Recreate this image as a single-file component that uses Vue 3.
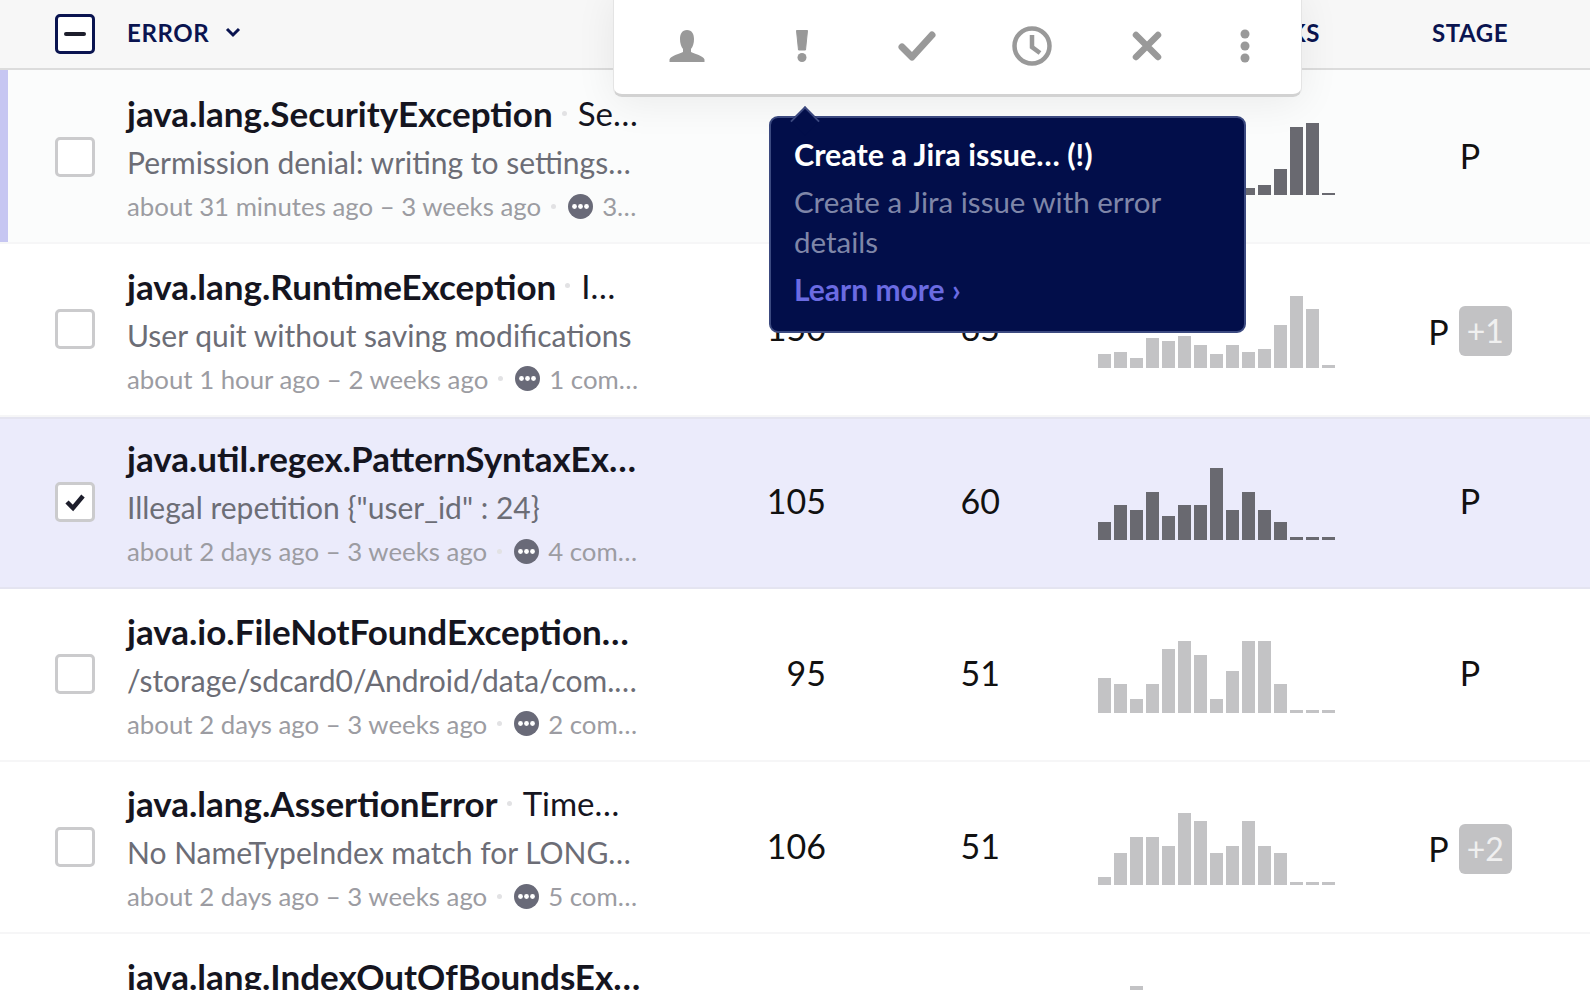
<script setup>
const rows = [
  { name: 'java.lang.SecurityException', sub: 'Se…', msg: 'Permission denial: writing to settings…', time: 'about 31 minutes ago – 3 weeks ago', comments: '3…', events: 180, users: 72, stage: 'P', extra: '', state: 'new', bars: [4, 6, 3, 8, 5, 7, 4, 3, 5, 6.7, 9.7, 26, 68, 72, 2.4] },
  { name: 'java.lang.RuntimeException', sub: 'I…', msg: 'User quit without saving modifications', time: 'about 1 hour ago – 2 weeks ago', comments: '1 com…', events: 150, users: 65, stage: 'P', extra: '+1', state: '', bars: [13.3, 16, 9.3, 29.3, 26.7, 32, 22.7, 13.3, 22.7, 16, 18.7, 42.7, 72, 58.7, 2.4] },
  { name: 'java.util.regex.PatternSyntaxEx…', sub: '', msg: 'Illegal repetition {"user_id" : 24}', time: 'about 2 days ago – 3 weeks ago', comments: '4 com…', events: 105, users: 60, stage: 'P', extra: '', state: 'selected', bars: [18.4, 34.6, 29.7, 47.8, 24, 34.6, 34.6, 72, 29.7, 47.8, 29.7, 18.4, 3, 3, 3] },
  { name: 'java.io.FileNotFoundException…', sub: '', msg: '/storage/sdcard0/Android/data/com.…', time: 'about 2 days ago – 3 weeks ago', comments: '2 com…', events: 95, users: 51, stage: 'P', extra: '', state: '', bars: [34.6, 28.2, 13.2, 28.2, 64, 72, 57.2, 13.2, 42, 72, 72, 28.2, 3, 3, 3] },
  { name: 'java.lang.AssertionError', sub: 'Time…', msg: 'No NameTypeIndex match for LONG…', time: 'about 2 days ago – 3 weeks ago', comments: '5 com…', events: 106, users: 51, stage: 'P', extra: '+2', state: '', bars: [8, 31.6, 47.8, 47.8, 39.5, 72, 63.6, 31.6, 39.5, 63.6, 39.5, 31.6, 3, 3, 3] },
  { name: 'java.lang.IndexOutOfBoundsEx…', sub: '', msg: 'Index: 4, Size: 3', time: 'about 2 days ago – 3 weeks ago', comments: '1 com…', events: 90, users: 48, stage: 'P', extra: '', state: '', bars: [20, 30, 72, 40, 30, 24, 40, 50, 30, 20, 24, 18, 3, 3, 3] },
]
</script>

<template>
  <div class="page">
    <div class="head">
      <div class="cell check-cell">
        <span class="box box-all"><i></i></span>
      </div>
      <div class="cell head-error">
        ERROR
        <svg class="chevron" width="16" height="11" viewBox="0 0 16 11"><path d="M2 2l6 6 6-6" fill="none" stroke="#0a1450" stroke-width="3"/></svg>
      </div>
      <div class="cell head-num">EVENTS</div>
      <div class="cell head-num">USERS</div>
      <div class="cell head-trend">2 WEEKS</div>
      <div class="cell head-stage">STAGE</div>
    </div>

    <div v-for="row in rows" :key="row.name" class="row" :class="row.state">
      <div class="cell check-cell">
        <span class="box">
          <svg v-if="row.state == 'selected'" width="26" height="22" viewBox="0 0 26 22"><path d="M5 11l6 6L21 5" fill="none" stroke="#1d1e2c" stroke-width="4.5"/></svg>
        </span>
      </div>
      <div class="cell error">
        <div class="title">
          <strong>{{ row.name }}</strong>
          <template v-if="row.sub">
            <span class="dot"></span>
            <span class="sub">{{ row.sub }}</span>
          </template>
        </div>
        <div class="msg">{{ row.msg }}</div>
        <div class="meta">
          <span>{{ row.time }}</span>
          <span class="dot small"></span>
          <svg class="bubble" width="25" height="25" viewBox="0 0 25 25">
            <circle cx="12.5" cy="12.5" r="12.5" fill="#696a78"/>
            <circle cx="6.5" cy="12.5" r="2.4" fill="#fff"/>
            <circle cx="12.5" cy="12.5" r="2.4" fill="#fff"/>
            <circle cx="18.5" cy="12.5" r="2.4" fill="#fff"/>
          </svg>
          <span class="count">{{ row.comments }}</span>
        </div>
      </div>
      <div class="cell num">{{ row.events }}</div>
      <div class="cell num users">{{ row.users }}</div>
      <div class="cell trend">
        <div class="bars">
          <span v-for="(b, i) in row.bars" :key="i" :style="{ height: b + 'px' }"></span>
        </div>
      </div>
      <div class="cell stage" :class="{ 'has-extra': row.extra }">
        <span>{{ row.stage }}</span>
        <span v-if="row.extra" class="badge">{{ row.extra }}</span>
      </div>
    </div>

    <div class="toolbar">
      <button>
        <svg width="36" height="34" viewBox="0 0 36 34"><path d="M18 1c5 0 7 4 7 9 0 4-1 7.500-3 10v3c4 2 12 3.500 13.500 7.500V33H.5v-2.500C2 26.500 10 25 14 23v-3C12 17.500 11 14 11 10c0-5 2-9 7-9z" fill="#999"/></svg>
      </button>
      <button>
        <svg width="14" height="34" viewBox="0 0 14 34"><path d="M1.500 1.500h11L10.500 21h-7z" fill="#999" stroke="#999" stroke-linejoin="round"/><circle cx="7" cy="28.500" r="4.500" fill="#999"/></svg>
      </button>
      <button>
        <svg width="38" height="30" viewBox="0 0 38 30"><path d="M4 16l10 10L34 4" fill="none" stroke="#999" stroke-width="7" stroke-linejoin="round" stroke-linecap="round"/></svg>
      </button>
      <button>
        <svg width="40" height="40" viewBox="0 0 40 40"><circle cx="20" cy="20" r="17.500" fill="none" stroke="#999" stroke-width="4.500"/><path d="M20 9v12l8 6" fill="none" stroke="#999" stroke-width="4.500"/></svg>
      </button>
      <button>
        <svg width="30" height="30" viewBox="0 0 30 30"><path d="M4 4l22 22M26 4L4 26" fill="none" stroke="#999" stroke-width="6.500" stroke-linecap="round"/></svg>
      </button>
      <button class="more">
        <svg width="10" height="34" viewBox="0 0 10 34"><circle cx="5" cy="5" r="4.500" fill="#999"/><circle cx="5" cy="17" r="4.500" fill="#999"/><circle cx="5" cy="29" r="4.500" fill="#999"/></svg>
      </button>
    </div>

    <div class="tip">
      <span class="tip-arrow"></span>
      <div class="tip-title">Create a Jira issue… (!)</div>
      <div class="tip-desc">Create a Jira issue with error details</div>
      <div class="tip-link">Learn more ›</div>
    </div>
  </div>
</template>

<style scoped>
.page {
  position: relative;
  width: 1590px;
  height: 990px;
  overflow: hidden;
  background: #fff;
  font-family: Lato, "Noto Sans", sans-serif;
  color: #111;
}

.head,
.row {
  display: grid;
  grid-template-columns: 109px 593px 188px 175px 333px 175px 17px;
}

.head {
  height: 70px;
  background: #f7f7f7;
  border-bottom: 2px solid #dcdcdc;
  box-sizing: border-box;
  align-items: center;
  font-size: 24px;
  font-weight: 700;
  color: #0a1450;
  letter-spacing: 0.6px;
}

.head-error,
.head-num,
.head-trend,
.head-stage {
  margin-bottom: 4px;
}

.head-error {
  padding-left: 18px;
  display: flex;
  align-items: center;
  gap: 16px;
}

.head-num {
  text-align: right;
  padding-right: 64px;
}

.head-trend {
  text-align: right;
  padding-right: 78px;
}

.head-stage {
  text-align: center;
  padding-right: 31px;
}

.head .check-cell {
  height: 68px;
}

.check-cell {
  display: flex;
  align-items: center;
  padding-left: 55px;
}

.box {
  display: flex;
  align-items: center;
  justify-content: center;
  width: 40px;
  height: 40px;
  box-sizing: border-box;
  border: 3px solid #cbcbcd;
  border-radius: 5px;
  background: #fff;
}

.box-all {
  border-color: #0a1450;
}

.box-all i {
  width: 22px;
  height: 4px;
  border-radius: 2px;
  background: #1d1e2c;
}

.row {
  height: 172.5px;
  box-sizing: border-box;
  border-bottom: 2px solid #f6f6f7;
  align-items: stretch;
}

.row.new {
  height: 174px;
  padding-top: 1.5px;
  background: #fbfcfc;
  box-shadow: inset 8px 0 0 #c6c6f2;
}

.row.selected {
  background: #ebebfb;
  border-bottom-color: #e4e4f0;
  box-shadow: inset 0 2px 0 #e4e4f0;
}

.error {
  padding: 17.5px 0 0 18px;
  min-width: 0;
}

.title {
  display: flex;
  align-items: center;
  height: 48px;
  font-size: 35px;
  white-space: nowrap;
  color: #15151f;
}

.title strong {
  font-weight: 700;
}

.dot {
  width: 5px;
  height: 5px;
  border-radius: 50%;
  background: #e2e2e4;
  margin: 0 11px 0 9px;
}

.dot.small {
  margin: 0 12px 0 10px;
}

.sub {
  font-weight: 400;
  font-size: 33px;
}

.msg {
  height: 48px;
  line-height: 48px;
  font-size: 30px;
  white-space: nowrap;
  color: #6c6d76;
  margin-top: 1px;
}

.meta {
  display: flex;
  align-items: center;
  height: 38px;
  font-size: 25.8px;
  white-space: nowrap;
  color: #9c9ca2;
  margin-top: 1px;
}

.bubble {
  margin-right: 9px;
}

.num {
  display: flex;
  align-items: center;
  justify-content: flex-end;
  padding: 0 64px 3px 0;
  font-size: 34px;
}

.num.users {
  padding-right: 65px;
}

.trend {
  padding: 51.5px 0 0 33px;
}

.bars {
  display: flex;
  align-items: flex-end;
  gap: 3px;
  height: 72px;
}

.bars span {
  width: 13px;
  background: #c3c3c5;
}

.new .bars span,
.selected .bars span {
  background: #696970;
}

.stage {
  display: flex;
  align-items: center;
  justify-content: center;
  gap: 10px;
  padding: 0 31px 3px 0;
  font-size: 34px;
}

.stage.has-extra {
  padding: 4px 31px 0 0;
}

.badge {
  width: 53px;
  height: 50px;
  line-height: 50px;
  border-radius: 6px;
  background: #c2c2c4;
  color: #f0f0f0;
  font-size: 32px;
  text-align: center;
}

.toolbar {
  position: absolute;
  top: -10px;
  left: 613px;
  width: 689px;
  height: 107px;
  box-sizing: border-box;
  padding: 19px 0 12px 15px;
  display: flex;
  background: #fff;
  border: 1px solid #e4e4e4;
  border-bottom: 3px solid #d2d2d2;
  border-radius: 9px;
  box-shadow: 0 6px 40px rgba(0, 0, 0, 0.07);
}

.toolbar button {
  width: 115px;
  padding: 0;
  border: 0;
  background: none;
  display: flex;
  align-items: center;
  justify-content: center;
}

.toolbar .more {
  width: 82px;
}

.tip {
  position: absolute;
  top: 116px;
  left: 769px;
  width: 477px;
  height: 217px;
  box-sizing: border-box;
  padding: 16px 23px 0;
  background: #020e4a;
  border: 2px solid #3c4a80;
  border-radius: 9px;
}

.tip-arrow {
  position: absolute;
  top: -8px;
  left: 23px;
  width: 22px;
  height: 22px;
  background: #020e4a;
  border-top: 2px solid #3c4a80;
  border-left: 2px solid #3c4a80;
  transform: rotate(45deg) scale(0.95);
  box-sizing: border-box;
}

.tip-title {
  position: relative;
  font-size: 30.5px;
  line-height: 40px;
  font-weight: 700;
  color: #fff;
}

.tip-desc {
  margin-top: 8px;
  font-size: 29.5px;
  line-height: 40px;
  color: #7f86a8;
}

.tip-link {
  margin-top: 7px;
  font-size: 30px;
  line-height: 40px;
  font-weight: 700;
  color: #6b6be2;
}
</style>

<style>
html, body {
  margin: 0;
  overflow: hidden;
}
</style>
